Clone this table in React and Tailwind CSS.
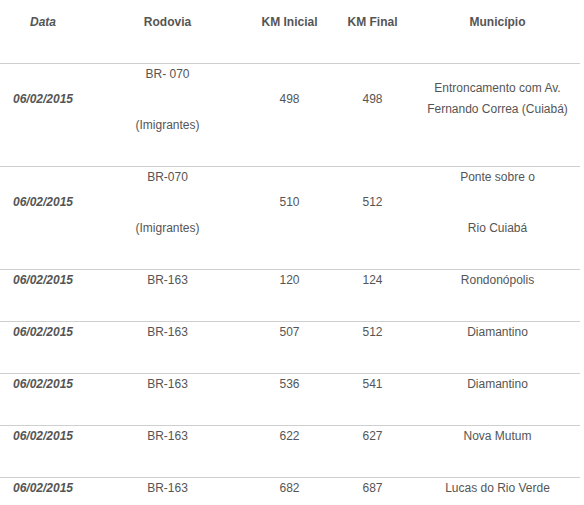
import React from "react";

const W = ["w-[86px]", "w-[163px]", "w-[81px]", "w-[85px]", "w-[165px]"];

function Cell({ i, className = "", children }) {
  return (
    <div className={`${W[i]} shrink-0 flex flex-col items-center text-center whitespace-nowrap ${className}`}>
      {children}
    </div>
  );
}

const simple = [
  ["120", "124", "Rondonópolis"],
  ["507", "512", "Diamantino"],
  ["536", "541", "Diamantino"],
  ["622", "627", "Nova Mutum"],
  ["682", "687", "Lucas do Rio Verde"],
];

export default function App() {
  return (
    <div
      className="w-[584px] h-[505px] overflow-hidden bg-white text-[#555] text-[12px] leading-[21px]"
      style={{ fontFamily: '"Liberation Sans", Arial, sans-serif' }}
    >
      <div className="w-[580px]">
        {/* header */}
        <div className="flex h-[63px] font-bold">
          <Cell i={0} className="pt-[12px] italic">Data</Cell>
          <Cell i={1} className="pt-[12px]">Rodovia</Cell>
          <Cell i={2} className="pt-[12px]">KM Inicial</Cell>
          <Cell i={3} className="pt-[12px]">KM Final</Cell>
          <Cell i={4} className="pt-[12px]">Município</Cell>
        </div>

        {/* row 1 */}
        <div className="flex h-[103px] border-t border-[#cfcfcf]">
          <Cell i={0} className="pt-[25px] font-bold italic">06/02/2015</Cell>
          <Cell i={1} className="gap-[30px]">
            <span>BR- 070</span>
            <span>(Imigrantes)</span>
          </Cell>
          <Cell i={2} className="pt-[25px]">498</Cell>
          <Cell i={3} className="pt-[25px]">498</Cell>
          <Cell i={4} className="pt-[14px]">
            <span>Entroncamento com Av.</span>
            <span>Fernando Correa (Cuiabá)</span>
          </Cell>
        </div>

        {/* row 2 */}
        <div className="flex h-[103px] border-t border-[#cfcfcf]">
          <Cell i={0} className="pt-[25px] font-bold italic">06/02/2015</Cell>
          <Cell i={1} className="gap-[30px]">
            <span>BR-070</span>
            <span>(Imigrantes)</span>
          </Cell>
          <Cell i={2} className="pt-[25px]">510</Cell>
          <Cell i={3} className="pt-[25px]">512</Cell>
          <Cell i={4} className="gap-[30px]">
            <span>Ponte sobre o</span>
            <span>Rio Cuiabá</span>
          </Cell>
        </div>

        {simple.map((r, k) => (
          <div key={k} className="flex h-[52px] border-t border-[#cfcfcf]">
            <Cell i={0} className="font-bold italic">06/02/2015</Cell>
            <Cell i={1}>BR-163</Cell>
            <Cell i={2}>{r[0]}</Cell>
            <Cell i={3}>{r[1]}</Cell>
            <Cell i={4}>{r[2]}</Cell>
          </div>
        ))}
      </div>
    </div>
  );
}
